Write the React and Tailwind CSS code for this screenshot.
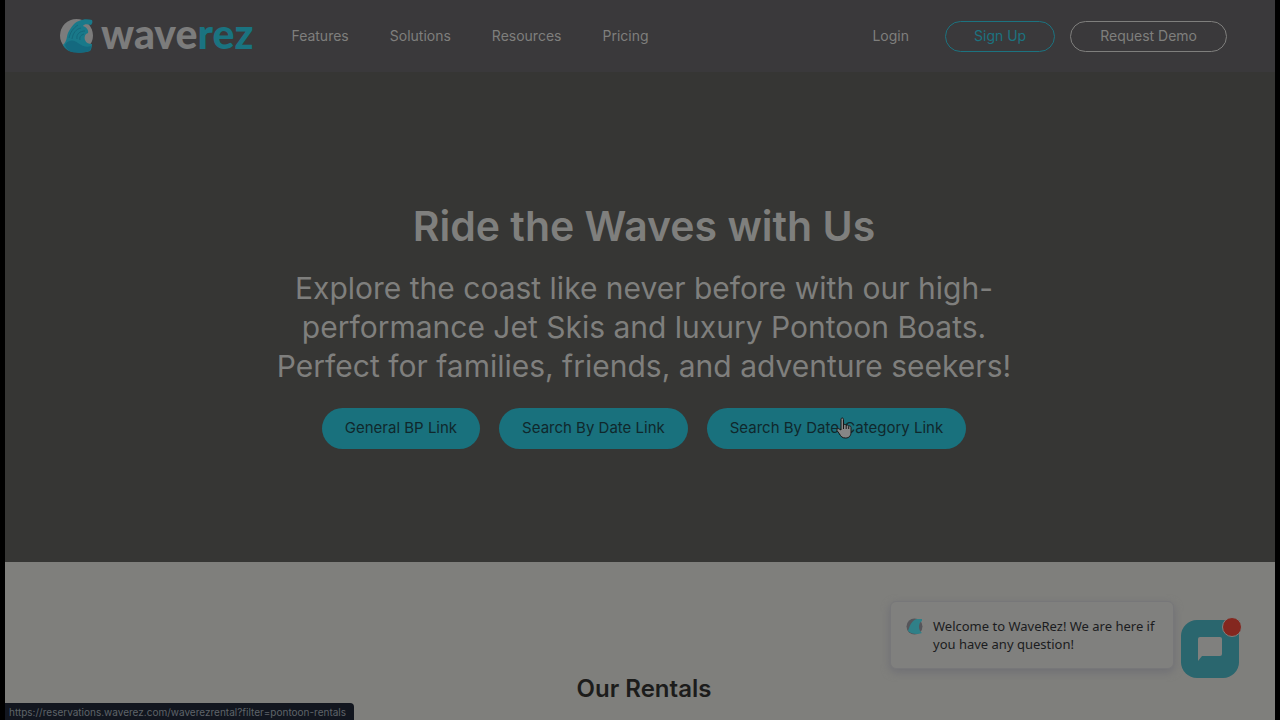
import { useId } from 'react';

const NAV_LINKS = ['Features', 'Solutions', 'Resources', 'Pricing'];

const RENTAL_LINKS = [
  { label: 'General BP Link', href: '#general' },
  { label: 'Search By Date Link', href: '#date' },
  { label: 'Search By Date/Category Link', href: '#category' },
];

function WaveMark({ className }) {
  const clip = useId();
  return (
    <svg viewBox="0 0 34 34" className={className} aria-hidden="true">
      <defs>
        <clipPath id={clip}>
          <circle cx="16.5" cy="16.5" r="16.5" />
        </clipPath>
      </defs>
      <path d="M0 0H34V22L31 26L4 27H0Z" fill="#7c7c7c" clipPath={`url(#${clip})`} />
      <path
        d="M3 26C8 21 6 17 9 12C12 7 15 3 19 2C23 0 28 0 32 1C33 3 32 5 31 6C27 5 24 5 23 7C26 8 29 11 28 14C25 15 24 18 25 21C26 24 29 25 32 25C32 28 31 31 30 32C25 34 17 34 12 33C8 32 4 29 3 26Z"
        fill="#19798a"
      />
      <path
        d="M5 26C9 20 14 21 18 24C22 27 27 29 31 27C31 30 30 32 29 32C24 34 17 34 12 33C8 32 6 29 5 26Z"
        fill="#14697f"
      />
      <path
        d="M9 19C10 14 13 9 18 6M12 20C13 14 16 10 21 9M17 20C16 15 20 12 25 12M20 21C19 18 21 16 24 15"
        fill="none"
        stroke="#15677a"
        strokeWidth="1"
      />
    </svg>
  );
}

function ChatAvatar() {
  return (
    <svg viewBox="0 0 17 17" className="mt-px size-[17px] shrink-0" aria-hidden="true">
      <circle cx="8.5" cy="8.5" r="8" fill="#55555a" />
      <path d="M2 13C4 7 6 2 11 1H16V3C12 5 12 12 16 15C11 17 5 16 2 13Z" fill="#2f8088" />
    </svg>
  );
}

function Logo() {
  return (
    <a href="#home" aria-label="waverez" className="flex items-center gap-[7px]">
      <WaveMark className="size-[34px]" />
      <span className="pb-1 font-['Lato'] text-[41px] leading-8 font-black text-[#7c7c7c]">
        wave<span className="text-[#1a7380]">rez</span>
      </span>
    </a>
  );
}

function Header() {
  return (
    <header className="flex h-[72px] items-center bg-[#3a393b] pr-12 pl-[55px] text-sm text-[#7f7f7d]">
      <Logo />
      <nav className="ml-[38px] flex gap-[41px]">
        {NAV_LINKS.map((label) => (
          <a key={label} href={`#${label.toLowerCase()}`}>
            {label}
          </a>
        ))}
      </nav>
      <div className="ml-auto flex items-center">
        <a href="#login" className="mr-9">
          Login
        </a>
        <button className="mr-[15px] h-[31px] rounded-full border border-[#1c7380] px-7 text-[#1c7380]">
          Sign Up
        </button>
        <button className="h-[31px] rounded-full border border-[#7f7f7d] px-[29px]">Request Demo</button>
      </div>
    </header>
  );
}

function HandCursor() {
  return (
    <svg viewBox="0 0 16 22" className="absolute top-[9px] left-[129px] h-[22px] w-4" aria-hidden="true">
      <path
        d="M5 13V2.500C5 .5 7.500 .5 7.500 2.500V8C8 7 10 7 10.200 8.500C11 7.500 12.500 8 12.700 9.300C13.500 8.500 15 9 15 10.500V15C15 19 13 21 9.500 21C6 21 5 19.500 3.500 17L1 13.500C.5 12 2 11 3.200 12Z"
        fill="#868686"
        stroke="#161616"
        strokeWidth="1"
      />
      <path d="M7.500 8V12M10.200 8.500V12M12.700 9.500V12" stroke="#161616" strokeWidth="1" />
    </svg>
  );
}

function Hero() {
  return (
    <section className="flex h-[490px] flex-col items-center justify-center bg-[#363634] pt-4 pl-2 text-center">
      <h1 className="text-[41px] leading-[50px] font-semibold text-[#7f7f7d]">Ride the Waves with Us</h1>
      <p className="mt-[18px] max-w-[740px] text-[30px] leading-[39px] text-[#7f7f7d]">
        Explore the coast like never before with our high-performance Jet Skis and luxury Pontoon Boats.
        Perfect for families, friends, and adventure seekers!
      </p>
      <div className="mt-[22px] flex gap-[19px]">
        {RENTAL_LINKS.map(({ label, href }, i) => (
          <a
            key={href}
            href={href}
            className="relative flex h-[41px] items-center rounded-full bg-[#19717d] px-[23px] text-[15px] text-[#10282c]"
          >
            {label}
            {i === 2 && <HandCursor />}
          </a>
        ))}
      </div>
    </section>
  );
}

function ChatWidget() {
  return (
    <aside className="absolute right-9 bottom-[42px] flex items-end gap-[7px] font-['Noto_Sans']">
      <div className="mb-[9px] flex w-[284px] gap-2.5 rounded-md border border-[#777779] bg-[#80807e] py-[15px] pr-4 pl-[15px] text-[13px] leading-[18px] text-[#1b1c20] shadow-[0_3px_8px_#6f6f74]">
        <ChatAvatar />
        <p>Welcome to WaveRez! We are here if you have any question!</p>
      </div>
      <button
        aria-label="Open chat"
        className="relative flex size-[58px] items-center justify-center rounded-2xl bg-[#2a666e]"
      >
        <svg viewBox="0 0 24 24" className="size-6" aria-hidden="true">
          <path d="M2 0H22Q24 0 24 2V17Q24 19 22 19H4L0 24V2Q0 0 2 0Z" fill="#80807e" />
        </svg>
        <span className="absolute -top-[3px] -right-[3px] size-5 rounded-full border border-[#80807e] bg-[#84271f]" />
      </button>
    </aside>
  );
}

export default function App() {
  return (
    <div className="h-screen bg-black px-[5px] font-['Inter',sans-serif]">
      <main className="relative flex h-full flex-col overflow-hidden bg-[#7f7f7c]">
        <Header />
        <Hero />
        <section className="pt-[111px] pl-2 text-center">
          <h2 className="text-2xl leading-8 font-semibold text-[#1c1c1b]">Our Rentals</h2>
        </section>
        <ChatWidget />
        <div className="absolute bottom-0 left-0 h-[17px] rounded-tr bg-[#12161f] pr-2 pl-1 text-[10px] leading-[19px] text-[#5f6469]">
          https://reservations.waverez.com/waverezrental?filter=pontoon-rentals
        </div>
      </main>
    </div>
  );
}
